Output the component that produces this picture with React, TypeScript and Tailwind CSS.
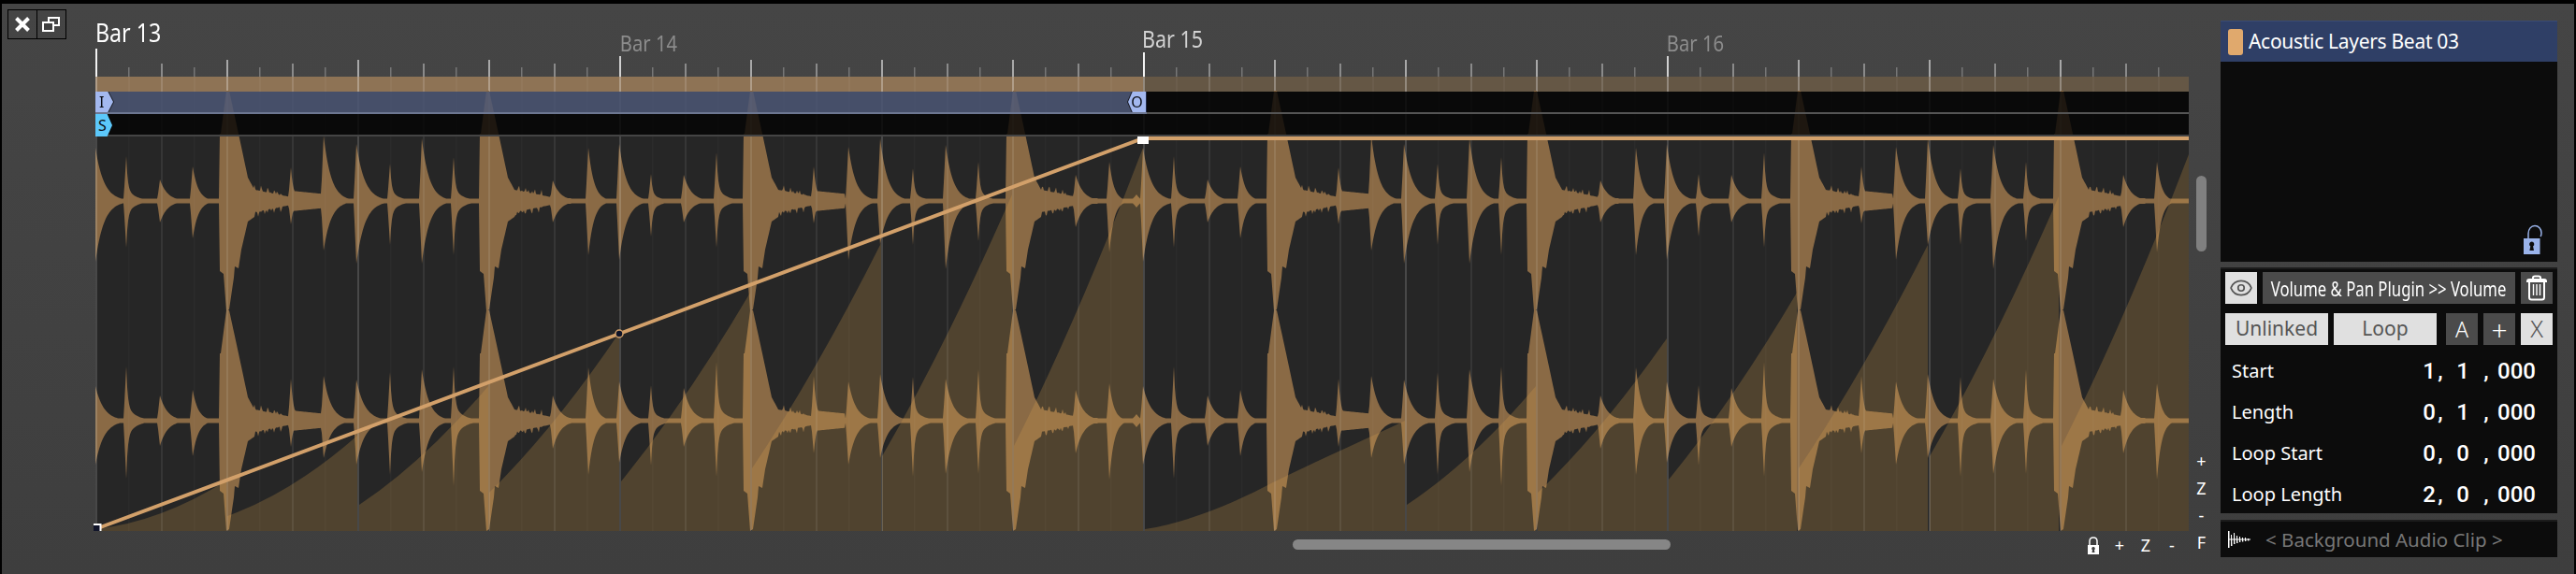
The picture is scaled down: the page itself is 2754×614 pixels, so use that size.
import React from 'react';
import { Eye } from 'lucide-react';

// offset, top amp ch1, bottom amp ch1, top amp ch2, bottom amp ch2, decay (0 = big hit, <=4 = needle)
const HITS: number[][] = [
  [0, 57, 65, 37, 47, 9], [33, 48, 50, 58, 62, 3], [69, 23, 23, 27, 27, 8], [104, 37, 40, 33, 38, 6],
  [140, 118, 118, 118, 118, 0], [209, 36, 25, 45, 28, 20], [244, 70, 53, 48, 40, 8], [279, 61, 67, 44, 47, 9],
  [315, 40, 47, 52, 58, 3], [349, 67, 67, 55, 55, 8], [383, 47, 58, 58, 70, 4], [418, 118, 118, 118, 118, 0],
  [489, 22, 23, 27, 30, 8], [527, 57, 58, 57, 58, 6], [560, 61, 63, 42, 45, 8], [594, 29, 38, 38, 48, 4],
  [629, 28, 23, 35, 28, 8], [664, 52, 50, 63, 60, 3], [700, 118, 118, 118, 118, 0], [768, 37, 24, 48, 35, 20],
  [805, 58, 63, 42, 47, 8], [839, 67, 47, 50, 40, 8], [874, 35, 47, 47, 60, 3], [909, 60, 73, 45, 57, 8],
  [944, 42, 43, 55, 57, 4], [981, 118, 118, 118, 118, 0], [1048, 28, 28, 33, 35, 8], [1084, 42, 55, 40, 63, 5],
];

const BIG_TOP = [[-8, 2], [-7, 72], [-6, 72], [-3, 95], [0, 118], [3, 118], [13, 72], [23, 25], [29, 14]];
const BIG_BOTTOM = [[-8, 2], [-7, 75], [-3, 78], [0, 118], [3, 116], [8, 82], [9, 70], [13, 72], [16, 52], [23, 22], [30, 17]];

const profile = (pts: number[][], d: number) => {
  for (let i = 1; i < pts.length; i++) {
    if (d <= pts[i][0]) {
      const [x0, y0] = pts[i - 1];
      const [x1, y1] = pts[i];
      return y0 + ((y1 - y0) * (d - x0)) / (x1 - x0);
    }
  }
  return -1;
};

const hitAmp = (amp: number, decay: number, d: number, big: number[][], seed: number) => {
  if (decay === 0) {
    if (d < -8) return 0;
    const p = profile(big, d);
    if (p >= 0) return p;
    // tail of a big hit, with small bumps
    const tail = 12 - ((d - 30) * 8) / 40;
    const bumps = d < 60 ? Math.max(0, Math.sin(d * 0.5 + seed) * Math.sin(d * 1.3 + seed * 2)) * 6 : 0;
    return Math.max(tail, 3) + bumps;
  }
  if (d < -3) return 0;
  if (d < 0) return amp * (1 + d / 3);
  if (decay <= 4) return amp * (0.72 * Math.exp(-d / 1.5) + 0.28 * Math.exp(-d / 10));
  if (decay === 20) return Math.max(amp * Math.exp(-d / 3), d < 34 ? 11 - d * 0.1 : 0);
  return amp * Math.exp(-d / decay);
};

const channelPath = (cy: number, topKey: number, bottomKey: number) => {
  const top: string[] = [];
  const bottom: string[] = [];
  for (let x = 102; x <= 2340; x++) {
    const o = x - 102;
    let t = 2.5;
    let b = 2.5;
    for (const shift of [0, 1120]) {
      for (const hit of HITS) {
        const d = o - hit[0] - shift;
        if (d < -8 || d > 90) continue;
        t = Math.max(t, hitAmp(hit[topKey], hit[5], d, BIG_TOP, hit[0]));
        b = Math.max(b, hitAmp(hit[bottomKey], hit[5], d, BIG_BOTTOM, hit[0] + 2));
      }
    }
    if (o > 1104) {
      const bump = Math.max(0, 7 - Math.abs(o - 1113) * 1.2);
      t = Math.max(t, bump);
      b = Math.max(b, bump);
    }
    top.push(`${x},${(cy - t).toFixed(1)}`);
    bottom.unshift(`${x},${(cy + b).toFixed(1)}`);
  }
  return `M${top.join(' L')} L${bottom.join(' L')} Z`;
};

const WAVE = channelPath(215, 1, 2) + channelPath(450, 3, 4);

// x0, y0, x1, y1, bend of each retrigger of the volume curve
const FADES = [
  [102, 566, 242, 514, 0.15], [243, 552, 382, 466, 0.29], [384, 540, 522, 413, 0.36], [523, 527, 662, 356, 0.4],
  [664, 515, 802, 313, 0.42], [804, 501, 942, 260, 0.43], [943, 488, 1082, 208, 0.43], [1084, 477, 1222, 158, 0.43],
  [1504, 540, 1642, 413, 0.36], [1644, 527, 1782, 362, 0.4], [1784, 513, 1921, 313, 0.42],
  [1923, 501, 2061, 262, 0.43], [2063, 488, 2201, 210, 0.43], [2204, 477, 2340, 165, 0.43],
];

const fadePath = (f: number[]) => {
  const [x0, y0, x1, y1, bend] = f;
  const cx = (x0 + x1) / 2;
  const cy = y0 - (y0 - y1) * bend;
  return `M${x0},568 L${x0},${y0} Q${cx},${cy} ${x1},${y1} L${x1},568 Z`;
};

const TICKS = Array.from({ length: 64 }, (_, i) => i);

const Waveform = () => (
  <svg className="absolute inset-0 overflow-visible" width={2238} height={470} viewBox="102 98 2238 470">
    <path d={WAVE} fill="#8a6a45" />
    {FADES.map((f) => (
      <path key={f[0]} d={fadePath(f)} fill="rgb(220,164,77)" fillOpacity={0.23} />
    ))}
    <path
      d="M1224,568 L1224,566 C1275,558 1325,535 1361,516 C1410,492 1460,470 1502,450 L1502,568 Z"
      fill="rgb(220,164,77)"
      fillOpacity={0.23}
    />
    {TICKS.map((i) => (
      <rect
        key={i}
        x={102 + i * 35}
        y={98}
        width={i % 2 === 0 ? 2 : 1.5}
        height={470}
        fill="#fff"
        fillOpacity={i % 8 === 0 ? 0.16 : i % 4 === 0 ? 0.1 : i % 2 === 0 ? 0.075 : 0.025}
      />
    ))}
    <polyline points="102,566 662,357 1222,148 2340,148" fill="none" stroke="#d2a06a" strokeWidth={4} />
    <rect x={100} y={560} width={8} height={8} fill="#11152a" />
    <path d="M100 561 H107.5 V568" fill="none" stroke="#fff" strokeWidth={2} />
    <circle cx={662} cy={357} r={4} fill="#0f1428" stroke="#d2a06a" strokeWidth={1.5} />
    <rect x={1216} y={146} width={12} height={8} fill="#fff" />
  </svg>
);

const BarLabel = ({ text, className }: { text: string; className: string }) => (
  <div className="overflow-visible">
    <span className={`inline-block origin-left scale-x-[0.86] whitespace-nowrap ${className}`}>{text}</span>
  </div>
);

const Ruler = () => (
  <div className="relative h-[78px] w-[2238px]">
    <div className="grid h-full grid-cols-4">
      <BarLabel text="Bar 13" className="pt-[13px] text-[27px] leading-[36px] text-white" />
      <BarLabel text="Bar 14" className="pt-[27px] pl-[1px] text-[23.5px] leading-[30px] text-[#8c8c8c]" />
      <BarLabel text="Bar 15" className="pt-[20px] text-[25px] leading-[34px] text-[#d2d2d2]" />
      <BarLabel text="Bar 16" className="pt-[27px] pl-[1px] text-[23.5px] leading-[30px] text-[#8c8c8c]" />
    </div>
    <svg className="absolute bottom-0 left-0" width={2238} height={30} viewBox="0 0 2238 30">
      {TICKS.map((i) => {
        const bar = i % 16 === 0;
        const h = i === 0 ? 30 : i === 32 ? 26 : bar ? 22 : i % 4 === 0 ? 18 : i % 2 === 0 ? 14 : 10;
        const c = i === 0 || i === 32 ? '#f2f2f2' : bar ? '#d0d0d0' : i % 4 === 0 ? '#a8a8a8' : i % 2 === 0 ? '#8a8a8a' : '#767676';
        return <rect key={i} x={i * 35} y={30 - h} width={i % 2 === 0 ? 2 : 1.5} height={h} fill={c} />;
      })}
    </svg>
  </div>
);

const Strip = () => (
  <div className="relative flex h-4 w-[2238px]">
    <div className="h-full w-[1120px] bg-[#8e7355]" />
    <div className="h-full flex-1 bg-[#655745]" />
    <svg className="absolute inset-0" width={2238} height={16}>
      {TICKS.map((i) => (
        <rect key={i} x={i * 35} y={0} width={2} height={16} fill="#fff" fillOpacity={i % 4 === 0 ? 0.3 : i % 2 === 0 ? 0.14 : 0.04} />
      ))}
    </svg>
  </div>
);

const Flag = ({ label, color, clip }: { label: string; color: string; clip: string }) => (
  <div className="drop-shadow-[1px_0_0_#16181f]">
    <div className={`flex h-full w-[19px] items-center justify-start pl-[4px] text-[16px] leading-none text-[#0b0d14] ${color} ${clip}`}>{label}</div>
  </div>
);

const Rows = () => (
  <div className="relative flex flex-col">
    <div className="flex h-6">
      <div className="flex w-[1124px] justify-between border-b-2 border-[#6d7791] bg-[rgba(76,87,117,0.85)]">
        <Flag label="I" color="bg-[#a3b8ef]" clip="[clip-path:polygon(0_0,70%_0,100%_50%,70%_100%,0_100%)]" />
        <div className="flex drop-shadow-[-1px_0_0_#16181f]">
          <div className="flex w-[19px] items-center justify-center bg-[#a3b8ef] text-[16px] leading-none text-[#0b0d14] [clip-path:polygon(25%_0,100%_0,100%_100%,25%_100%,0_50%)]">O</div>
          <div className="w-[1px] bg-[#232c4a]" />
        </div>
      </div>
      <div className="flex-1 border-b-2 border-[#555] bg-[rgba(3,3,3,0.8)]" />
    </div>
    <div className="flex h-6 border-b-2 border-[#444] bg-[rgba(3,3,3,0.8)]">
      <div className="h-[22px]">
        <div className="flex h-[24px] w-[18px] items-center pl-[3px] text-[16px] leading-none text-[#0b0d14] bg-[#5cc8fb] [clip-path:polygon(0_0,70%_0,100%_50%,70%_100%,0_100%)]">S</div>
      </div>
    </div>
  </div>
);

const ClosedLock = () => (
  <svg className="h-[19px] w-[12px] shrink-0" viewBox="0 0 12 19" fill="none">
    <path d="M2 10 V5 C2 2.5 3.5 1 6 1 C8.5 1 10 2.5 10 5 V10" stroke="#fff" strokeWidth={1.5} />
    <path fillRule="evenodd" d="M0 9 H12 V19 H0 Z M6 11 A1.8 1.8 0 0 0 5 14.3 L4.5 17 H7.5 L7 14.3 A1.8 1.8 0 0 0 6 11 Z" fill="#fff" />
  </svg>
);

const OpenLock = () => (
  <svg className="h-[32px] w-[20px]" viewBox="0 0 20 32" fill="none">
    <path d="M5 15 V10 C5 5 8 1.5 12 1.5 C16 1.5 19 5 19 9 C19 11 18.5 12.5 18 13" stroke="#9ab3ea" strokeWidth={1.5} />
    <path fillRule="evenodd" d="M0 15 H17.5 V32 H0 Z M8.7 18.5 A2.8 2.8 0 0 0 7.3 23.6 L6.4 28 H11 L10.1 23.6 A2.8 2.8 0 0 0 8.7 18.5 Z" fill="#9ab3ea" />
  </svg>
);

const TrashIcon = () => (
  <svg width={24} height={28} viewBox="0 0 24 28" fill="none" stroke="#fff" strokeWidth={2}>
    <path d="M8 5 V3 C8 2 9 1.5 10 1.5 H14 C15 1.5 16 2 16 3 V5" />
    <path d="M2 7 C2 5.5 3 5 4 5 H20 C21 5 22 5.5 22 7 Z" />
    <path d="M4 8 V24 C4 26 5 26.5 6.5 26.5 H17.5 C19 26.5 20 26 20 24 V8" />
    <path d="M8.5 10 V22 M12 10 V22 M15.5 10 V22" strokeWidth={1.4} />
  </svg>
);

const ClipWaveIcon = () => (
  <svg width={24} height={20} viewBox="0 0 24 20" fill="#fff">
    <path d="M0 1 L1.5 1 L1.5 19 L0 19 Z M3 5 L4 5 L4.5 17 L3 17 Z M6 3 L7 3 L7.5 15 L6 15 Z M9 6 L10 6 L10.5 14 L9 14 Z M12 7 L13 7 L13.4 13 L12 13 Z M0 9.5 H24 V10.5 H0 Z M15 8 L16 8 L16.4 12.5 L15 12.5 Z M18 8 L19 8 L19.4 12 L18 12 Z M21 9 L22 9 L22.4 11.5 L21 11.5 Z" />
  </svg>
);

const PanelButton = ({ children, light, className }: { children: React.ReactNode; light?: boolean; className: string }) => (
  <div className={`flex h-[34px] items-center justify-center ${light ? 'bg-[#e0e0e0] text-[#555]' : 'bg-[#4b4b4b] text-white'} ${className}`}>{children}</div>
);

const VALUES: [string, string, string][] = [
  ['Start', '1', '1'],
  ['Length', '0', '1'],
  ['Loop Start', '0', '0'],
  ['Loop Length', '2', '0'],
];

const ValueRow = ({ name, bar, beat }: { name: string; bar: string; beat: string }) => (
  <div className="flex h-[44px] items-center pr-[24px] pl-[12px] text-white">
    <span className="flex-1 text-[20px]">{name}</span>
    <div className="flex font-['Roboto',sans-serif] text-[24px] leading-none font-medium">
      <span className="w-[24px] text-right">{bar}</span>
      <span className="w-[10px] text-center">,</span>
      <span className="w-[38px] text-center">{beat}</span>
      <span className="mr-[6px] w-[12px] text-center">,</span>
      <span className="w-[40px] text-center">000</span>
    </div>
  </div>
);

const SidePanel = () => (
  <div className="flex w-[360px] shrink-0 flex-col pt-[18px]">
    <div className="flex h-[258px] flex-col bg-[#0c0c0c]">
      <div className="flex h-[44px] items-center gap-[6px] border-t border-[#3a4b74] bg-[#2f3f66] pl-2 text-[21px] tracking-[-0.3px] text-white">
        <div className="h-[28px] w-4 rounded-[3px] bg-[#e0a96d]" />
        <span>Acoustic Layers Beat 03</span>
      </div>
      <div className="flex flex-1 items-end justify-end pr-4 pb-2">
        <OpenLock />
      </div>
    </div>
    <div className="mt-[6px] flex h-[263px] flex-col border-t-2 border-[#1c1c1c] bg-[#0c0c0c] pt-[3px]">
      <div className="flex gap-[6px] px-[5px]">
        <PanelButton light className="w-[34px]">
          <Eye size={26} strokeWidth={1.6} />
        </PanelButton>
        <PanelButton className="w-[270px]">
          <span className="inline-block scale-x-[0.76] text-[22px] whitespace-nowrap">Volume &amp; Pan Plugin &gt;&gt; Volume</span>
        </PanelButton>
        <PanelButton className="w-[34px]">
          <TrashIcon />
        </PanelButton>
      </div>
      <div className="mt-[10px] flex px-[5px] text-[21px]">
        <PanelButton light className="w-[110px]">Unlinked</PanelButton>
        <PanelButton light className="ml-[6px] w-[110px]">Loop</PanelButton>
        <PanelButton className="ml-[10px] w-[34px] text-[23px] font-light text-[#ddd]">A</PanelButton>
        <PanelButton className="ml-[6px] w-[34px] text-[30px] font-light">+</PanelButton>
        <PanelButton light className="ml-[6px] w-[34px] text-[25px] font-light">X</PanelButton>
      </div>
      <div className="mt-[6px] flex flex-col">
        {VALUES.map(([name, bar, beat]) => (
          <ValueRow key={name} name={name} bar={bar} beat={beat} />
        ))}
      </div>
    </div>
    <div className="mt-[7px] flex h-[40px] items-center border-t-2 border-[#1c1c1c] bg-[#0c0c0c] pl-2 text-[20.5px] text-[#777]">
      <ClipWaveIcon />
      <span className="ml-4">&lt; Background Audio Clip &gt;</span>
    </div>
  </div>
);

const ToolButtons = () => (
  <div className="flex pt-[6px] pl-[6px]">
    <div className="flex h-[32px] w-[32px] items-center justify-center border border-black">
      <svg width={16} height={16} viewBox="0 0 16 16" stroke="#fff" strokeWidth={4}>
        <path d="M1.5 1.5 L14.5 14.5 M14.5 1.5 L1.5 14.5" />
      </svg>
    </div>
    <div className="-ml-px flex h-[32px] w-[32px] items-center justify-center border border-black">
      <svg width={20} height={16} viewBox="0 0 20 16" fill="none" stroke="#fff" strokeWidth={2}>
        <rect x={7} y={1} width={11} height={8} />
        <rect x={1} y={6} width={11} height={9} fill="#3f3f3f" />
      </svg>
    </div>
  </div>
);

export default function App() {
  return (
    <div className="flex h-[614px] w-[2754px] overflow-hidden border-x-2 border-t-4 border-black bg-gradient-to-b from-[#454545] to-[#3e3e3e] font-['Noto_Sans',sans-serif]">
      <div className="w-[100px] shrink-0">
        <ToolButtons />
      </div>
      <div className="flex w-[2238px] shrink-0 flex-col">
        <Ruler />
        <Strip />
        <div className="relative h-[470px] w-[2238px] bg-[#262626]">
          <Waveform />
          <Rows />
        </div>
        <div className="flex h-[42px] pt-[5px]">
          <div className="mt-[4px] ml-[1280px] h-[11px] w-[404px] shrink-0 rounded-full bg-[#868686]" />
          <div className="ml-[446px] flex h-[20px] shrink-0 items-center">
            <ClosedLock />
            <div className="ml-[8px] flex text-[18px] leading-none text-white">
              <span className="w-[28px] text-center">+</span>
              <span className="w-[28px] text-center">Z</span>
              <span className="w-[28px] text-center">-</span>
            </div>
          </div>
        </div>
      </div>
      <div className="flex w-[34px] shrink-0 flex-col items-start pl-2">
        <div className="mt-[184px] h-[81px] w-[11px] rounded-full bg-[#808080]" />
        <div className="mt-[210px] flex w-[11px] flex-col items-center text-[18px] leading-[29px] text-white">
          <span className="h-[29px]">+</span>
          <span className="h-[29px]">Z</span>
          <span className="h-[29px]">-</span>
          <span className="h-[29px]">F</span>
        </div>
      </div>
      <SidePanel />
    </div>
  );
}
